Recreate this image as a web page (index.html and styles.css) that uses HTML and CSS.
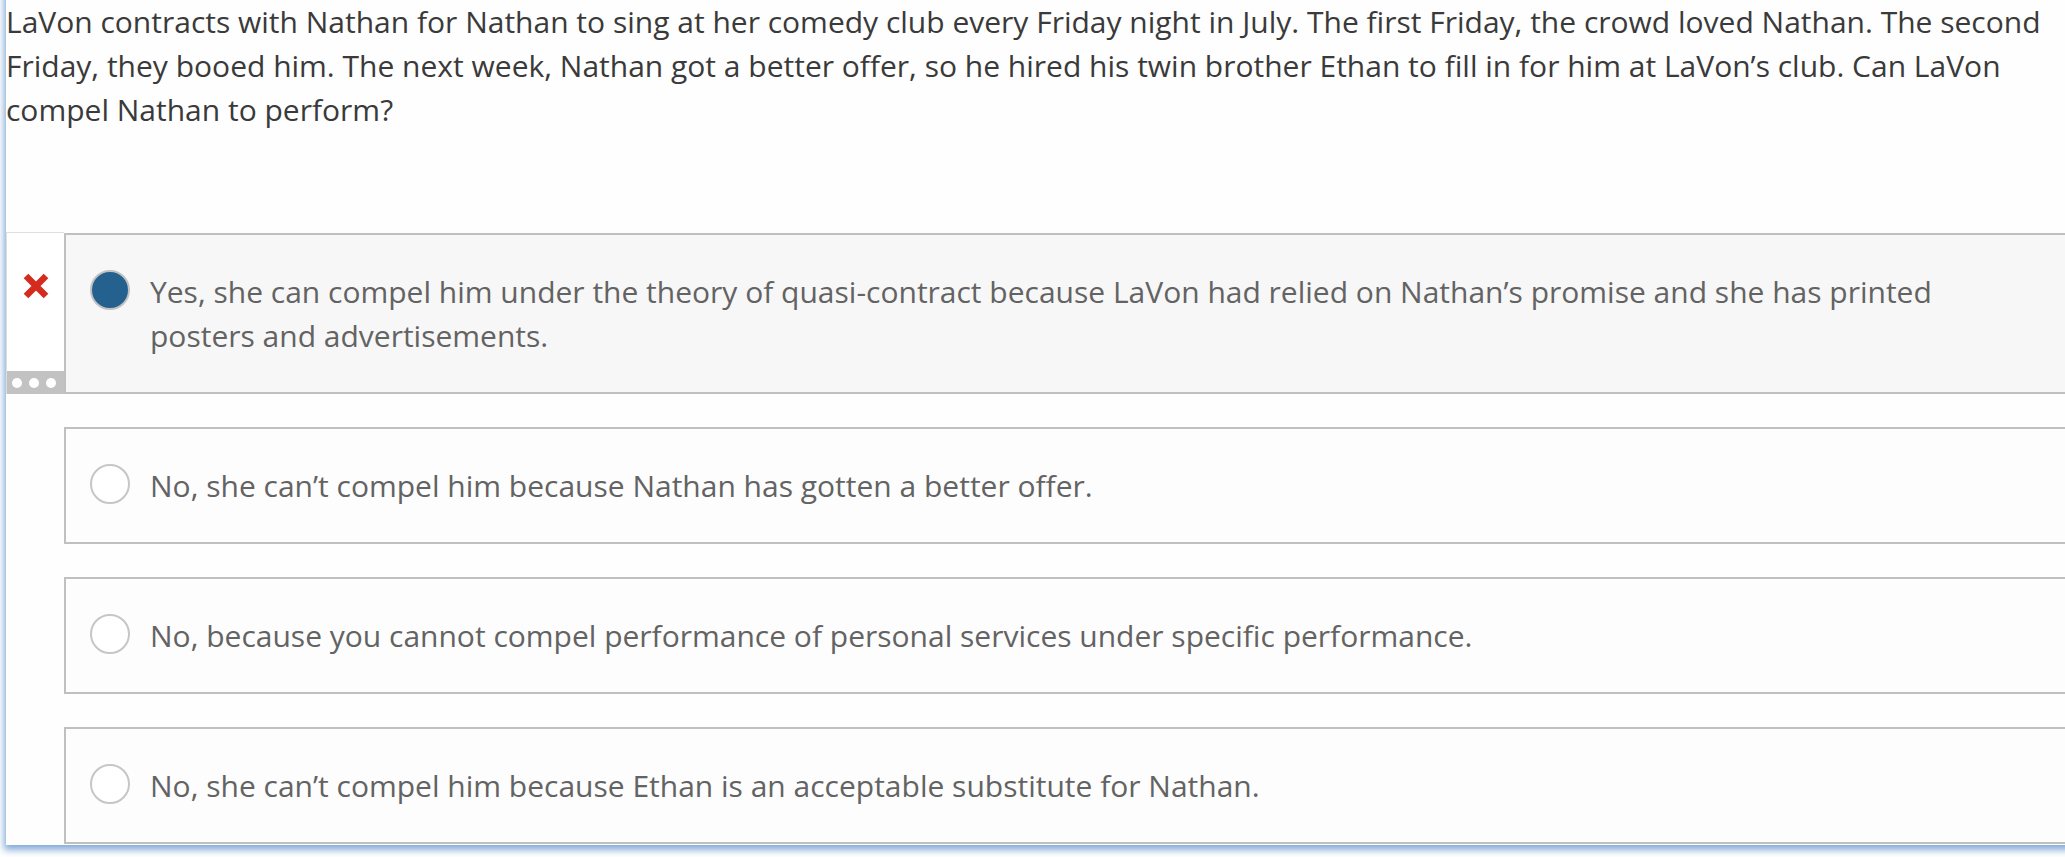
FILE: index.html
```html
<!DOCTYPE html>
<html lang="en">
<head>
<meta charset="utf-8">
<title>Question</title>
<link rel="stylesheet" href="styles.css">
</head>
<body>
<div class="panel">
  <p class="question">LaVon contracts with Nathan for Nathan to sing at her comedy club every Friday night in July. The first Friday, the crowd loved Nathan. The second Friday, they booed him. The next week, Nathan got a better offer, so he hired his twin brother Ethan to fill in for him at LaVon’s club. Can LaVon compel Nathan to perform?</p>
  <div class="choices">
    <div class="row">
      <div class="marker">
        <svg class="wrong" width="26" height="26" viewBox="0 0 26 26" aria-hidden="true">
          <path d="M3 3 L23 23 M23 3 L3 23" stroke="#d42b1e" stroke-width="6.5" stroke-linecap="butt" fill="none"/>
        </svg>
        <div class="dots"><span></span><span></span><span></span></div>
      </div>
      <div class="choice selected">
        <span class="radio checked"></span>
        <span class="label">Yes, she can compel him under the theory of quasi-contract because LaVon had relied on Nathan’s promise and she has printed posters and advertisements.</span>
      </div>
    </div>
    <div class="row">
      <div class="spacer"></div>
      <div class="choice">
        <span class="radio"></span>
        <span class="label">No, she can’t compel him because Nathan has gotten a better offer.</span>
      </div>
    </div>
    <div class="row">
      <div class="spacer"></div>
      <div class="choice">
        <span class="radio"></span>
        <span class="label">No, because you cannot compel performance of personal services under specific performance.</span>
      </div>
    </div>
    <div class="row">
      <div class="spacer"></div>
      <div class="choice">
        <span class="radio"></span>
        <span class="label">No, she can’t compel him because Ethan is an acceptable substitute for Nathan.</span>
      </div>
    </div>
  </div>
</div>
</body>
</html>
```
FILE: styles.css
```css
html, body {
  margin: 0;
  padding: 0;
  background: #ffffff;
  overflow: hidden;
  height: 857px;
}

body {
  font-family: "Open Sans", "Noto Sans", "Liberation Sans", sans-serif;
}

.panel {
  margin: -20px 0 0 6px;
  padding: 20px 0 1px 0;
  width: 2120px;
  background: #fefefe;
  box-shadow: 0 3px 7px 2px rgba(100, 150, 205, 0.8);
}

.question {
  margin: 0;
  padding: 0;
  width: 2053px;
  font-size: 30px;
  line-height: 44px;
  color: #3a3a3a;
}

.choices {
  margin-top: 101px;
  display: flex;
  flex-direction: column;
  gap: 33px;
}

.row {
  display: grid;
  grid-template-columns: 58px 1fr;
}

.marker {
  display: flex;
  flex-direction: column;
  align-items: center;
  justify-content: space-between;
  border-top: 1px solid #dedede;
  border-left: 1px solid #dedede;
  margin-top: -1px;
  padding-top: 40px;
  background: #ffffff;
}

.wrong {
  display: block;
}

.dots {
  align-self: stretch;
  height: 23px;
  background: #c2c2c2;
  display: flex;
  align-items: center;
  gap: 7px;
  padding-left: 5px;
}

.dots span {
  width: 10px;
  height: 10px;
  border-radius: 50%;
  background: #ffffff;
}

.choice {
  display: flex;
  align-items: flex-start;
  gap: 20px;
  padding: 35px 150px 34px 24px;
  border: 2px solid #c0c0c0;
  border-right: none;
  background: #fdfdfd;
}

.choice.selected {
  background: #f7f7f7;
}

.radio {
  flex: none;
  width: 36px;
  height: 36px;
  border: 2px solid #c6c6c6;
  border-radius: 50%;
  background: #ffffff;
}

.radio.checked {
  background: #25618f;
  border-color: #c2c2c2;
}

.label {
  font-size: 30px;
  line-height: 44px;
  color: #636363;
}
```
